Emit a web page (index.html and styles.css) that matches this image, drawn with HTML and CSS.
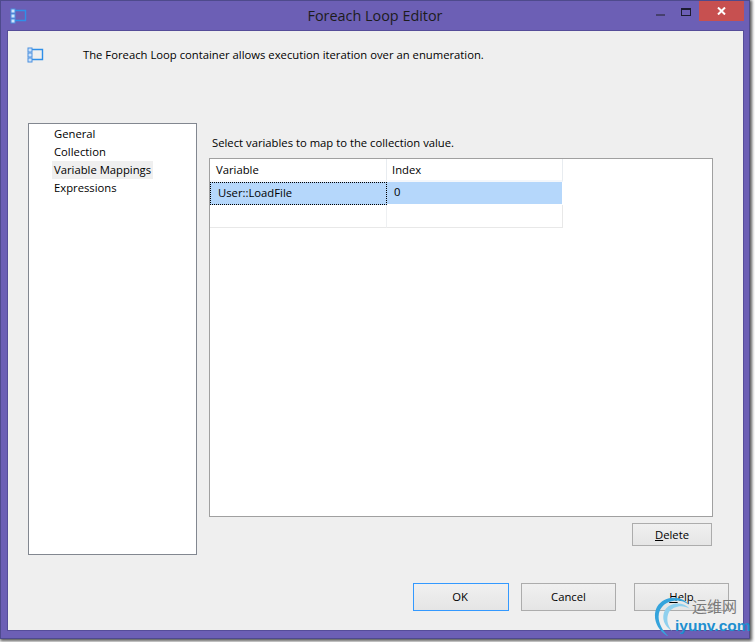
FILE: index.html
```html
<!DOCTYPE html>
<html lang="en">
<head>
<meta charset="utf-8">
<title>Foreach Loop Editor</title>
<link rel="stylesheet" href="styles.css">
</head>
<body>
<div class="window">
  <div class="titlebar">
    <svg class="app-icon" width="17" height="16" viewBox="0 0 17 16"><path d="M5 2.5h10.5v10H5" fill="none" stroke="#2f8fe8" stroke-width="1.4"/><rect x="1" y="1" width="4" height="4" fill="#cfe4fb" stroke="#4a90e0"/><rect x="1" y="6" width="4" height="4" fill="#cfe4fb" stroke="#4a90e0"/><rect x="1" y="11" width="4" height="4" fill="#cfe4fb" stroke="#4a90e0"/></svg>
    <div class="title">Foreach Loop Editor</div>
    <div class="controls">
      <span class="ctl"><span class="min"></span></span>
      <span class="ctl"><span class="max"></span></span>
      <span class="close"><svg width="9" height="8" viewBox="0 0 9 8"><path d="M1 0.5l7 7M8 0.5l-7 7" stroke="#fff" stroke-width="2" fill="none"/></svg></span>
    </div>
  </div>
  <div class="client">
    <div class="header">
      <svg class="app-icon" width="17" height="16" viewBox="0 0 17 16"><path d="M5 2.5h10.5v10H5" fill="none" stroke="#2f8fe8" stroke-width="1.4"/><rect x="1" y="1" width="4" height="4" fill="#cfe4fb" stroke="#4a90e0"/><rect x="1" y="6" width="4" height="4" fill="#cfe4fb" stroke="#4a90e0"/><rect x="1" y="11" width="4" height="4" fill="#cfe4fb" stroke="#4a90e0"/></svg>
      <span class="desc">The Foreach Loop container allows execution iteration over an enumeration.</span>
    </div>
    <div class="body">
      <ul class="nav">
        <li><span>General</span></li>
        <li><span>Collection</span></li>
        <li><span class="active">Variable Mappings</span></li>
        <li><span>Expressions</span></li>
      </ul>
      <div class="main">
        <div class="caption">Select variables to map to the collection value.</div>
        <div class="grid">
          <div class="row head"><div class="cell c1">Variable</div><div class="cell c2">Index</div></div>
          <div class="row sel"><div class="cell c1">User::LoadFile</div><div class="cell c2">0</div></div>
          <div class="row blank"><div class="cell c1"></div><div class="cell c2"></div></div>
        </div>
        <div class="main-actions"><button class="btn btn-delete"><u>D</u>elete</button></div>
      </div>
    </div>
    <div class="footer">
      <button class="btn btn-main btn-ok">OK</button>
      <button class="btn btn-main btn-cancel">Cancel</button>
      <button class="btn btn-main btn-help"><u>H</u>elp</button>
    </div>
  </div>
</div>
<div class="watermark">
  <svg class="swirl" width="42" height="44" viewBox="0 0 42 44"><path d="M37 11C30 1 12 1 5 13C0 23 4 36 17 43C9 35 4 25 8 16C13 6 28 3 37 11Z" fill="#35a4dc"/><path d="M38 15C31 7 18 8 13 16C9 24 12 32 20 37C15 31 14 24 17 18C21 12 31 10 38 15Z" fill="#8fd0ee"/></svg>
  <span class="wm-cn">运维网</span>
  <span class="wm-en">iyunv.com</span>
</div>
</body>
</html>
```
FILE: styles.css
```css
* { box-sizing: border-box; }
html, body { margin: 0; padding: 0; }
body {
  width: 755px;
  height: 642px;
  overflow: hidden;
  background: #fff;
  position: relative;
  font-family: "Open Sans", "Noto Sans", sans-serif;
  font-size: 11.27px;
  color: #000;
}
.window {
  width: 750px;
  height: 639px;
  background: #6c5fb5;
  border: 1px solid #4e4a8c;
  box-shadow: 1px 1px 3px 1px #555;
  display: flex;
  flex-direction: column;
}
.titlebar {
  height: 30px;
  flex: none;
  display: flex;
  align-items: flex-start;
  position: relative;
  padding: 7px 0 0 9px;
}
.title {
  position: absolute;
  left: 0;
  right: 0;
  top: 5px;
  text-align: center;
  font-size: 14.4px;
  line-height: 20px;
  color: #1c1c1c;
}
.controls {
  position: absolute;
  right: 5px;
  top: 0;
  display: flex;
}
.ctl {
  width: 26px;
  height: 20px;
  display: flex;
  align-items: center;
  justify-content: center;
}
.min { width: 9px; height: 2px; margin-top: 8px; background: #46406e; }
.max { width: 10px; height: 8px; border: 1px solid #1c1c30; border-top-width: 2px; margin-top: 2px; }
.close {
  width: 45px;
  height: 20px;
  background: #c75050;
  display: flex;
  align-items: center;
  justify-content: center;
}
.client {
  width: 735px;
  height: 599px;
  margin-left: 7px;
  background: #efefef;
  outline: 1px solid #554d99;
  display: flex;
  flex-direction: column;
}
.header {
  height: 92px;
  flex: none;
  display: flex;
  align-items: flex-start;
  padding: 16px 0 0 19px;
}
.desc { margin: 0 0 0 39px; line-height: 15px; }
.body { display: flex; gap: 12px; padding-left: 20px; }
.nav {
  list-style: none;
  margin: 0;
  padding: 1px 0 0 23px;
  width: 169px;
  height: 432px;
  background: #fff;
  border: 1px solid #828790;
}
.nav li { height: 18px; line-height: 17px; }
.nav span { display: inline-block; padding: 0 2px; height: 18px; }
.nav .active { background: #efefef; }
.main { width: 504px; }
.caption { height: 35px; padding: 12px 0 0 3px; line-height: 16px; }
.grid {
  height: 359px;
  background: #fff;
  border: 1px solid #a0a0a0;
}
.row { display: flex; width: 353px; }
.cell { height: 23px; line-height: 20px; }
.c1 { width: 177px; border-right: 1px solid #eef0f2; }
.c2 { width: 176px; }
.head .cell { height: 23px; border-bottom: 2px solid #f4f7fb; padding-left: 6px; line-height: 21px; border-right: 1px solid #e8ecf0; }
.head .c2 { padding-left: 5px; }
.sel .c1 { background: #b5d7fb; border: 1px dotted #000; padding-left: 7px; }
.sel .c2 { background: #b5d7fb; width: 175px; padding-left: 7px; border-bottom: 1px solid #fff; }
.blank .cell { border-bottom: 1px solid #e8e8e8; }
.blank .c2 { border-right: 1px solid #e8e8e8; }
.main-actions { display: flex; justify-content: flex-end; padding: 6px 1px 0 0; }
.btn {
  font: inherit;
  color: #000;
  background: linear-gradient(#f0f0f0, #e5e5e5);
  border: 1px solid #acacac;
  padding: 0;
  border-radius: 0;
}
.btn-delete { width: 80px; height: 23px; }
.footer { display: flex; justify-content: flex-end; padding: 28px 14px 0 0; }
.btn-main { height: 28px; width: 95px; padding-bottom: 2px; }
.btn-ok { width: 96px; border-color: #3399ff; padding-right: 2px; }
.btn-cancel { margin-left: 12px; }
.btn-help { margin-left: 18px; }
.watermark {
  position: absolute;
  left: 652px;
  top: 594px;
  width: 103px;
  height: 42px;
  overflow: hidden;
}
.swirl { position: absolute; left: 0; top: 0; }
.wm-cn {
  position: absolute;
  left: 40px;
  top: 2px;
  font-family: "Noto Sans CJK SC", sans-serif;
  font-size: 15px;
  line-height: 20px;
  color: #7a7a7a;
}
.wm-en {
  position: absolute;
  left: 23px;
  top: 22px;
  font-family: "Liberation Sans", sans-serif;
  font-size: 15.5px;
  font-weight: 700;
  line-height: 20px;
  color: #1e8fd0;
}
```
